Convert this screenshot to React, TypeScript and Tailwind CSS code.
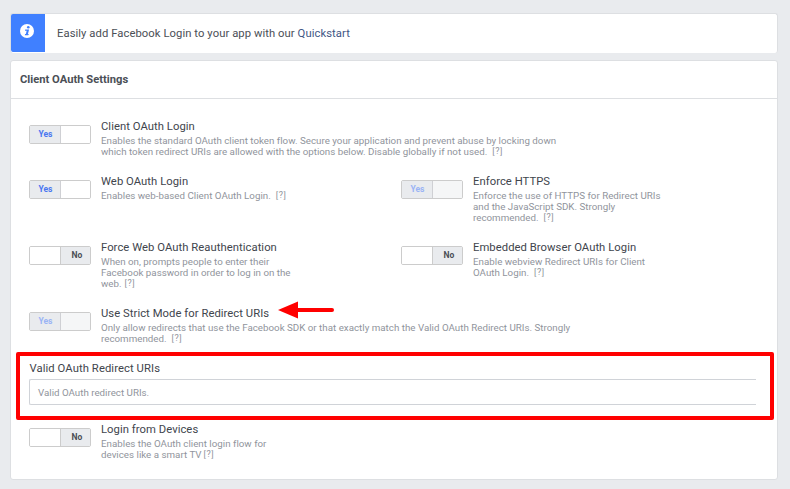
import React from "react";

type ToggleProps = { on?: boolean; disabled?: boolean };

function Toggle({ on = false, disabled = false }: ToggleProps) {
  const label = on ? (disabled ? "text-[#9ab4f5]" : "text-[#4a77f0]") : "text-[#4b4f56]";
  const empty = disabled ? "bg-[#f5f6f7]" : "bg-white";
  const cell = "flex justify-center bg-[#e9ebee] pt-[1.5px] text-[8.5px] leading-[12px] font-bold";
  return (
    <div className="mt-[7px] flex h-[19px] w-[62px] shrink-0 overflow-hidden rounded-[2px] border border-[#cccccc]">
      {on ? (
        <>
          <div className={`${cell} w-[31px] border-r border-[#cfd0d4] pl-px ${label}`}>Yes</div>
          <div className={`flex-1 ${empty}`} />
        </>
      ) : (
        <>
          <div className="w-[31px] border-r border-[#cccccc] bg-white" />
          <div className={`${cell} w-[29px] pl-[3px] ${label}`}>No</div>
        </>
      )}
    </div>
  );
}

type Line = { text: string; help?: string };
type SettingProps = ToggleProps & { title: string; lines: Line[] };

function Setting({ title, lines, on, disabled }: SettingProps) {
  return (
    <div className="flex w-[372px] shrink-0">
      <Toggle on={on} disabled={disabled} />
      <div className="pt-px pl-[10px] whitespace-nowrap">
        <div className="h-4 text-[11.25px] leading-4 tracking-[0.05px] text-[#41454d]">{title}</div>
        {lines.map((line) => (
          <div key={line.text} className="flex h-[11px] text-[9.75px] leading-[11px] tracking-[0.01px] text-[#90949c]">
            <span>{line.text}</span>
            {line.help && <span className={`text-[9px] tracking-[0.5px] ${line.help}`}>[?]</span>}
          </div>
        ))}
      </div>
    </div>
  );
}

export default function App() {
  return (
    <div className="h-[489px] w-[790px] overflow-hidden bg-[#e9ebee] pt-[13px] pl-[10px] font-['Roboto',sans-serif]">
      <div className="flex h-10 w-[768px] overflow-hidden rounded-[3px] border border-b-0 border-[#dddfe2] bg-white">
        <div className="flex h-[38px] w-[34px] justify-center rounded-bl-[2px] bg-[#4080ff] pt-[10px]">
          <svg className="-ml-[2px] h-[14px] w-[14px]" viewBox="0 0 14 14">
            <circle cx="7" cy="7" r="7" fill="#fff" />
            <circle cx="8.3" cy="3.2" r="1.3" fill="#4080ff" />
            <path d="M5.2 5.4h3.9L7.9 10.1h1L8.2 11.3H4.8l.3-1.2h.7l.9-3.4H4.9z" fill="#4080ff" />
          </svg>
        </div>
        <p className="pt-[12px] pl-3 text-[11.25px] leading-4 tracking-[0.065px] whitespace-nowrap text-[#4b4f56]">
          Easily add Facebook Login to your app with our <a className="text-[#3f5685]">Quickstart</a>
        </p>
      </div>

      <section className="mt-[7px] h-[420px] w-[768px] rounded-[3px] border border-[#dddfe2] bg-white">
        <h2 className="h-[38px] border-b border-[#dddfe2] pt-[11px] pl-[9px] text-[11.2px] leading-4 font-bold text-[#4b4f56]">
          Client OAuth Settings
        </h2>
        <div className="pt-[19px] pl-[18px]">
          <div className="flex h-[55px]">
            <Setting
              on
              title="Client OAuth Login"
              lines={[
                { text: "Enables the standard OAuth client token flow. Secure your application and prevent abuse by locking down" },
                { text: "which token redirect URIs are allowed with the options below. Disable globally if not used.", help: "ml-[5px]" },
              ]}
            />
          </div>
          <div className="flex h-[66px]">
            <Setting
              on
              title="Web OAuth Login"
              lines={[{ text: "Enables web-based Client OAuth Login.", help: "ml-[5px]" }]}
            />
            <Setting
              on
              disabled
              title="Enforce HTTPS"
              lines={[
                { text: "Enforce the use of HTTPS for Redirect URIs" },
                { text: "and the JavaScript SDK. Strongly" },
                { text: "recommended.", help: "ml-[5px]" },
              ]}
            />
          </div>
          <div className="flex h-[66px]">
            <Setting
              title="Force Web OAuth Reauthentication"
              lines={[
                { text: "When on, prompts people to enter their" },
                { text: "Facebook password in order to log in on the" },
                { text: "web.", help: "ml-[3px]" },
              ]}
            />
            <Setting
              title="Embedded Browser OAuth Login"
              lines={[
                { text: "Enable webview Redirect URIs for Client" },
                { text: "OAuth Login.", help: "ml-[5px]" },
              ]}
            />
          </div>
          <div className="relative flex h-[47px]">
            <Setting
              on
              disabled
              title="Use Strict Mode for Redirect URIs"
              lines={[
                { text: "Only allow redirects that use the Facebook SDK or that exactly match the Valid OAuth Redirect URIs. Strongly" },
                { text: "recommended.", help: "ml-[5px]" },
              ]}
            />
            <svg className="absolute top-[-4px] left-[249px] h-[18px] w-[57px]" viewBox="0 0 57 18">
              <path d="M0 9 20 .5v17z" fill="#f00" />
              <path d="M18 9h36" stroke="#f00" strokeWidth="4" strokeLinecap="round" />
            </svg>
          </div>
          <div className="-ml-[13px] h-[68px] w-[758px] rounded-[2px] border-4 border-[#ff0000] pt-[5px] pl-[9px]">
            <div className="h-[18px] pl-[0.5px] text-[11.25px] leading-4 tracking-[0.08px] text-[#41454d]">Valid OAuth Redirect URIs</div>
            <div className="h-[26px] w-[727px] rounded-l-[2px] border border-r-0 border-[#d0d3d8] pt-[7px] pl-2 text-[9.75px] leading-[11px] text-[#90949c]">
              Valid OAuth redirect URIs.
            </div>
          </div>
          <div className="flex pt-px">
            <Setting
              title="Login from Devices"
              lines={[
                { text: "Enables the OAuth client login flow for" },
                { text: "devices like a smart TV", help: "ml-[2px]" },
              ]}
            />
          </div>
        </div>
      </section>
    </div>
  );
}
